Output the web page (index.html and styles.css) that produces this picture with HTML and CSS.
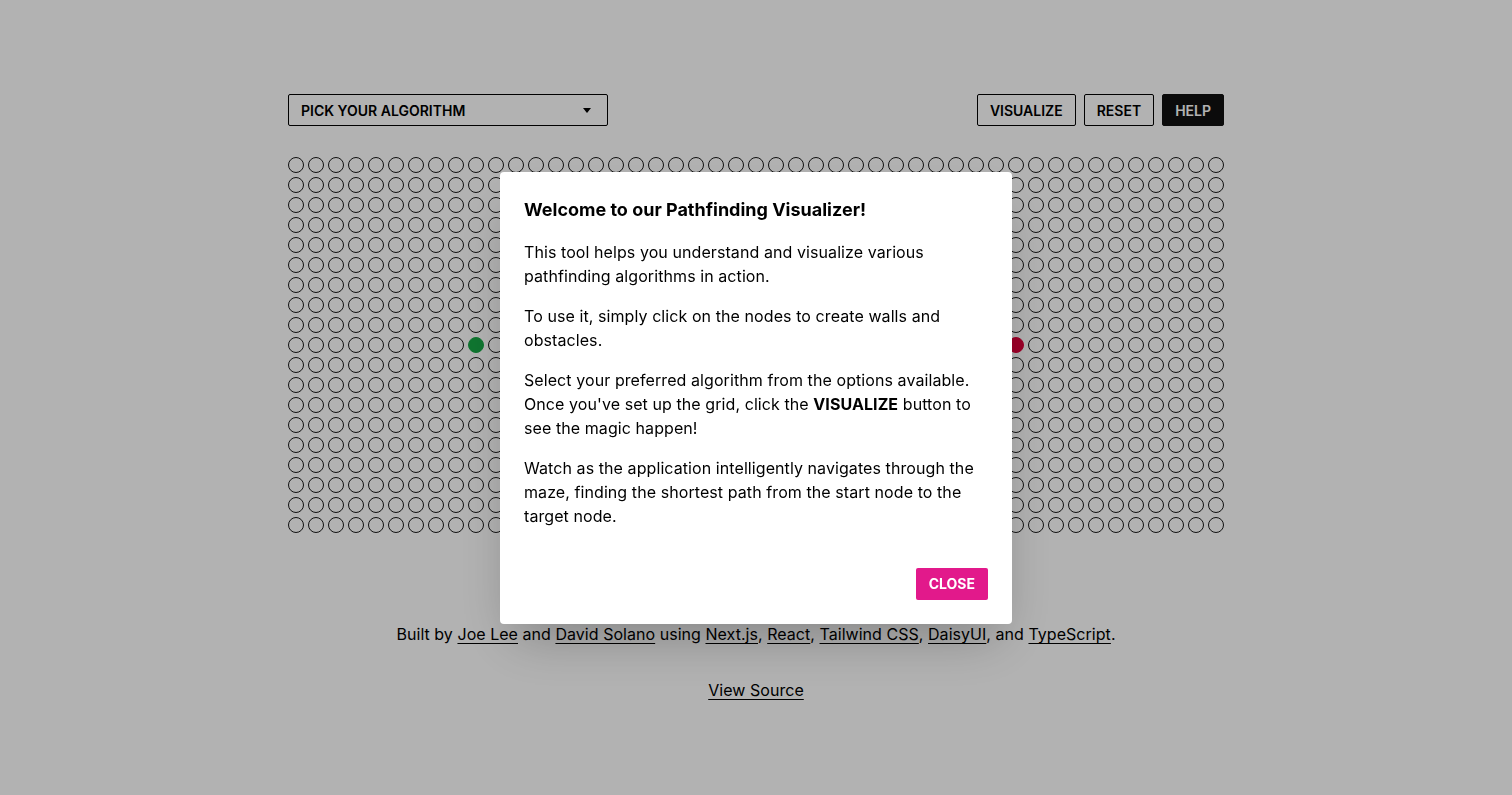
FILE: index.html
```html
<!DOCTYPE html>
<html lang="en">
<head>
<meta charset="utf-8">
<title>Pathfinding Visualizer</title>
<link rel="stylesheet" href="styles.css">
</head>
<body>
<main class="page">
  <div class="toolbar">
    <div class="select">
      <span>PICK YOUR ALGORITHM</span>
      <svg class="caret" width="8" height="5" viewBox="0 0 8 5"><path d="M0 0h8L4 5z" fill="#000"/></svg>
    </div>
    <div class="actions">
      <button class="btn">VISUALIZE</button>
      <button class="btn">RESET</button>
      <button class="btn btn-dark">HELP</button>
    </div>
  </div>
  <div class="grid" id="grid"></div>
  <footer class="footer">
    <p>Built by <a href="#">Joe Lee</a> and <a href="#">David Solano</a> using <a href="#">Next.js</a>, <a href="#">React</a>, <a href="#">Tailwind CSS</a>, <a href="#">DaisyUI</a>, and <a href="#">TypeScript</a>.</p>
    <p class="source"><a href="#">View Source</a></p>
  </footer>
</main>
<div class="overlay">
  <div class="modal">
    <h3 class="modal-title">Welcome to our Pathfinding Visualizer!</h3>
    <p>This tool helps you understand and visualize various pathfinding algorithms in action.</p>
    <p>To use it, simply click on the nodes to create walls and obstacles.</p>
    <p>Select your preferred algorithm from the options available. Once you've set up the grid, click the <strong>VISUALIZE</strong> button to see the magic happen!</p>
    <p>Watch as the application intelligently navigates through the maze, finding the shortest path from the start node to the target node.</p>
    <div class="modal-action">
      <button class="btn-close">CLOSE</button>
    </div>
  </div>
</div>
<script src="script.js"></script>
</body>
</html>
```

FILE: styles.css
```css
* { box-sizing: border-box; }
html, body { margin: 0; padding: 0; }
body {
  background: #fff;
  color: #000;
  font-family: Inter, "Noto Sans", sans-serif;
  width: 1512px;
  height: 795px;
  overflow: hidden;
}
.page {
  width: 936px;
  margin: 0 auto;
  padding-top: 94px;
}
.toolbar {
  display: flex;
  justify-content: space-between;
  align-items: center;
  height: 32px;
}
.select {
  width: 320px;
  height: 32px;
  border: 1px solid #000;
  border-radius: 2px;
  display: flex;
  align-items: center;
  justify-content: space-between;
  padding: 0 16px 0 12px;
  font-size: 14px;
  font-weight: 600;
}
.caret { margin-top: 1px; }
.actions { display: flex; gap: 8px; }
.btn {
  height: 32px;
  padding: 0 12px;
  border: 1px solid #000;
  border-radius: 2px;
  background: transparent;
  font-family: inherit;
  font-size: 14px;
  font-weight: 600;
  color: #000;
}
.btn-dark { background: #111; border-color: #111; color: #fff; }
.grid {
  margin-top: 31px;
  display: grid;
  grid-template-columns: repeat(47, 16px);
  grid-auto-rows: 16px;
  gap: 4px;
}
.node {
  width: 16px;
  height: 16px;
  border: 1px solid #1a1a1a;
  border-radius: 50%;
}
.node.start { background: #16a845; border-color: #16a845; }
.node.target { background: #e0003a; border-color: #e0003a; }
.footer {
  margin-top: 89px;
  text-align: center;
  font-size: 16px;
  line-height: 24px;
  letter-spacing: 0.04px;
}
.footer p { margin: 0; }
.footer a { color: #000; text-decoration: underline; text-underline-offset: 3px; }
.footer .source { margin-top: 32px; }
.overlay {
  position: fixed;
  inset: 0;
  background: rgba(0, 0, 0, 0.3);
  display: flex;
  align-items: center;
  justify-content: center;
}
.modal {
  width: 512px;
  background: #fff;
  border-radius: 4px;
  padding: 24px;
  box-shadow: 0 25px 50px -12px rgba(0, 0, 0, 0.25);
}
.modal-title {
  margin: 0;
  font-size: 18px;
  line-height: 28px;
  font-weight: 700;
}
.modal p {
  margin: 16px 0;
  font-size: 16px;
  line-height: 24px;
  letter-spacing: 0.08px;
}
.modal-action {
  margin-top: 40px;
  display: flex;
  justify-content: flex-end;
}
.btn-close {
  height: 32px;
  padding: 0 13px;
  border: none;
  border-radius: 2px;
  background: #e2198b;
  color: #fff;
  font-family: inherit;
  font-size: 14px;
  font-weight: 700;
}
```

FILE: script.js
```js
const grid = document.getElementById('grid');
const frag = document.createDocumentFragment();
for (let r = 0; r < 19; r++) {
  for (let c = 0; c < 47; c++) {
    const d = document.createElement('div');
    d.className = 'node';
    if (r === 9 && c === 9) d.classList.add('start');
    if (r === 9 && c === 36) d.classList.add('target');
    frag.appendChild(d);
  }
}
grid.appendChild(frag);
```
